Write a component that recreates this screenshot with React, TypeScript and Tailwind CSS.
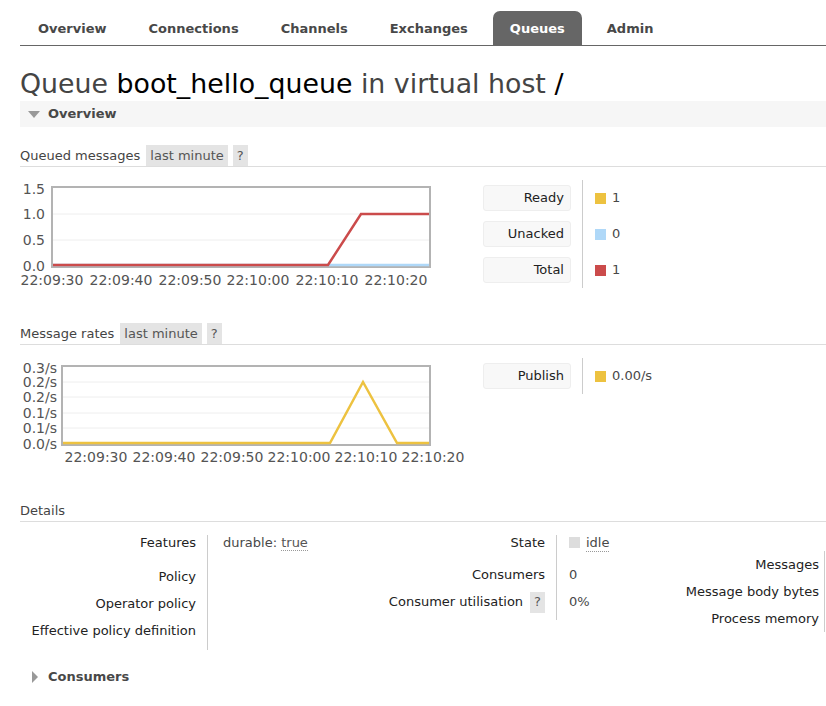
import React from "react";

const tabs = ["Overview", "Connections", "Channels", "Exchanges", "Queues", "Admin"];

const axisText = { fontFamily: "DejaVu Sans, sans-serif", fontSize: 14, fill: "#545454" };

const Badge = ({ children }: { children: React.ReactNode }) => (
  <span className="inline-flex h-[21px] items-center bg-[#e4e4e4] px-1 text-[#555]">{children}</span>
);

const SectionHeader = ({ title }: { title: string }) => (
  <div className="ml-5 flex items-center gap-[6px] border-b border-[#ddd] text-[#444]">
    <span>{title}</span>
    <div className="flex gap-[5px]">
      <Badge>last minute</Badge>
      <Badge>?</Badge>
    </div>
  </div>
);

const QueuedChart = () => {
  const xs = [52, 121, 190, 258, 327, 396];
  const labels = ["22:09:30", "22:09:40", "22:09:50", "22:10:00", "22:10:10", "22:10:20"];
  const ys: [string, number][] = [["1.5", 189], ["1.0", 214], ["0.5", 240], ["0.0", 266]];
  return (
    <svg width={450} height={110} viewBox="20 180 450 110" className="block shrink-0">
      <line x1={52} x2={430} y1={214} y2={214} stroke="#eee" />
      <line x1={52} x2={430} y1={240} y2={240} stroke="#eee" />
      <rect x={52} y={187} width={378} height={80} fill="none" stroke="#b3b3b3" strokeWidth={2} />
      <polyline points="53,265 429,265" fill="none" stroke="#afd8f8" strokeWidth={2.5} />
      <polyline points="53,265 328,265 361,214 429,214" fill="none" stroke="#cb4b4b" strokeWidth={2.5} />
      {ys.map(([t, y]) => (
        <text key={t} x={45} y={y + 5} textAnchor="end" style={axisText}>{t}</text>
      ))}
      {xs.map((x, i) => (
        <text key={x} x={x} y={285} textAnchor="middle" style={axisText}>{labels[i]}</text>
      ))}
    </svg>
  );
};

const RatesChart = () => {
  const xs = [96, 164, 232, 299, 366, 433];
  const labels = ["22:09:30", "22:09:40", "22:09:50", "22:10:00", "22:10:10", "22:10:20"];
  const ys: [string, number][] = [["0.3/s", 368], ["0.2/s", 382], ["0.2/s", 397], ["0.1/s", 413], ["0.1/s", 428], ["0.0/s", 444]];
  return (
    <svg width={450} height={115} viewBox="20 355 450 115" className="block shrink-0">
      {[382, 397, 413, 428].map((y) => (
        <line key={y} x1={62} x2={430} y1={y} y2={y} stroke="#eee" />
      ))}
      <rect x={62} y={366} width={368} height={79} fill="none" stroke="#b3b3b3" strokeWidth={2} />
      <polyline points="63,443 330,443 363,382 397,443 429,443" fill="none" stroke="#edc240" strokeWidth={2.5} />
      {ys.map(([t, y], i) => (
        <text key={i} x={57} y={y + 5} textAnchor="end" style={axisText}>{t}</text>
      ))}
      {xs.map((x, i) => (
        <text key={x} x={x} y={462} textAnchor="middle" style={axisText}>{labels[i]}</text>
      ))}
    </svg>
  );
};

type LegendRow = { label: string; color: string; value: string };

const Legend = ({ rows }: { rows: LegendRow[] }) => (
  <div className="ml-[13px] flex">
    <div className="flex flex-col gap-[10px] border-r border-[#ccc] py-[5px] pr-[11px]">
      {rows.map((r) => (
        <div
          key={r.label}
          className="flex h-[26px] w-[88px] items-center justify-end rounded-[3px] border border-[#eee] bg-[#f8f8f8] pr-[6px] text-[#222]"
        >
          {r.label}
        </div>
      ))}
    </div>
    <div className="flex flex-col gap-[10px] py-[5px] pl-3">
      {rows.map((r) => (
        <div key={r.label} className="flex h-[26px] items-center gap-[6px] text-[#484848]">
          <span className="h-[11px] w-[11px]" style={{ backgroundColor: r.color }} />
          {r.value}
        </div>
      ))}
    </div>
  </div>
);

export default function App() {
  return (
    <div className="min-h-screen overflow-hidden bg-white font-['DejaVu_Sans',sans-serif] text-[13px] leading-4 text-[#484848]">
      {/* nav */}
      <div className="ml-5 mt-[11px] border-b border-[#666]">
        <ul className="flex gap-[8px] pl-px">
          {tabs.map((t) => (
            <li
              key={t}
              className={`flex h-[34px] items-center rounded-t-[7px] px-[17px] pt-px font-bold ${
                t === "Queues" ? "bg-[#666] text-white" : "text-[#484848]"
              }`}
            >
              {t}
            </li>
          ))}
        </ul>
      </div>

      <h1 className="ml-5 mt-[23px] text-[26.8px] leading-[30px] text-[#444]">
        Queue <span className="text-black">boot_hello_queue</span> in virtual host{" "}
        <span className="text-black">/</span>
      </h1>

      <div className="ml-5 mt-[2px] flex h-[26px] items-center gap-2 bg-[#f6f6f6] pl-2 font-bold text-[#484848]">
        <svg width={12} height={7} viewBox="0 0 12 7">
          <polygon points="0,0 12,0 6,7" fill="#999" />
        </svg>
        Overview
      </div>

      <div className="mt-[18px]">
        <SectionHeader title="Queued messages" />
        <div className="ml-5 mt-[13px] flex items-start">
          <QueuedChart />
          <Legend
            rows={[
              { label: "Ready", color: "#edc240", value: "1" },
              { label: "Unacked", color: "#afd8f8", value: "0" },
              { label: "Total", color: "#cb4b4b", value: "1" },
            ]}
          />
        </div>
      </div>

      <div className="mt-[33px]">
        <SectionHeader title="Message rates" />
        <div className="ml-5 mt-[10px] flex items-start">
          <RatesChart />
          <div className="mt-[3px]">
            <Legend rows={[{ label: "Publish", color: "#edc240", value: "0.00/s" }]} />
          </div>
        </div>
      </div>

      <div className="ml-5 mt-[33px] border-b border-[#ddd] pb-[2px] text-[#444]">Details</div>

      <div className="mt-[13px] flex items-start">
        {/* table 1 */}
        <div className="flex">
          <div className="w-[208px] border-r border-[#ccc] pr-[11px] text-right text-[#222]">
            <div className="h-[34px]">Features</div>
            <div className="h-[27px]">Policy</div>
            <div className="h-[27px]">Operator policy</div>
            <div className="h-[27px]">Effective policy definition</div>
          </div>
          <div className="w-[160px] pl-[15px]">
            <div className="h-[34px]">
              durable: <span className="border-b border-dotted border-[#999] text-[#555]">true</span>
            </div>
          </div>
        </div>

        {/* table 2 */}
        <div className="flex">
          <div className="w-[189px] border-r border-[#ccc] pr-[11px] text-right text-[#222]">
            <div className="h-[32px]">State</div>
            <div className="h-[27px]">Consumers</div>
            <div className="flex h-[26px] items-start justify-end">
              <div className="flex h-4 items-center gap-[7px]">
                Consumer utilisation
                <Badge>?</Badge>
              </div>
            </div>
          </div>
          <div className="w-[93px] pl-3">
            <div className="flex h-[32px] items-start gap-[6px]">
              <span className="mt-[2px] h-[11px] w-[11px] bg-[#ddd]" />
              <span className="border-b border-dotted border-[#999]">idle</span>
            </div>
            <div className="h-[27px]">0</div>
            <div className="h-[26px]">0%</div>
          </div>
        </div>

        {/* table 3 */}
        <div className="mt-[16px] flex">
          <div className="w-[175px] shrink-0 border-r border-[#ccc] pr-[5px] text-right text-[#222]">
            <div className="flex h-[27px] items-center justify-end">Messages</div>
            <div className="flex h-[27px] items-center justify-end">Message body bytes</div>
            <div className="flex h-[27px] items-center justify-end">Process memory</div>
          </div>
        </div>
      </div>

      <div className="ml-5 mt-[14px] flex h-[26px] items-center gap-[10px] pl-3 font-bold text-[#484848]">
        <svg width={6} height={12} viewBox="0 0 6 12">
          <polygon points="0,0 6,6 0,12" fill="#999" />
        </svg>
        Consumers
      </div>
    </div>
  );
}
